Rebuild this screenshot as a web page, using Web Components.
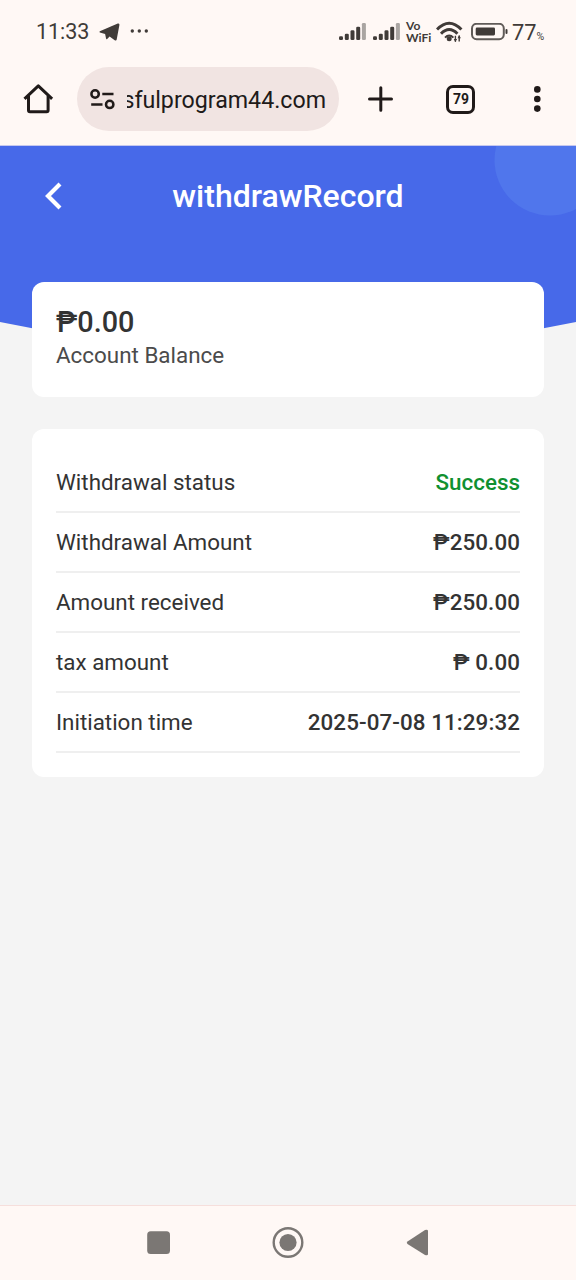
<!DOCTYPE html>
<html lang="en">
<head>
<meta charset="utf-8">
<title>withdrawRecord</title>
<style>
html,body{margin:0;height:100%}
body{font-family:Roboto,"Liberation Sans",sans-serif;background:#f4f4f4;color:#333}
</style>
</head>
<body>
<phone-screen>
  <status-bar slot="top"></status-bar>
  <browser-bar slot="top" tabs="79">sfulprogram44.com</browser-bar>
  <page-header>withdrawRecord</page-header>
  <balance-card amount="₱0.00">Account Balance</balance-card>
  <record-card>
    <record-row label="Withdrawal status" success>Success</record-row>
    <record-row label="Withdrawal Amount">₱250.00</record-row>
    <record-row label="Amount received">₱250.00</record-row>
    <record-row label="tax amount">₱ 0.00</record-row>
    <record-row label="Initiation time">2025-07-08 11:29:32</record-row>
  </record-card>
  <nav-bar slot="bottom"></nav-bar>
</phone-screen>
<script>
function define(name, html, setup) {
  customElements.define(name, class extends HTMLElement {
    connectedCallback() {
      if (this.shadowRoot) return;
      const root = this.attachShadow({mode: 'open'});
      root.innerHTML = html;
      if (setup) setup(root, this);
    }
  });
}

define('phone-screen', `
<style>
:host{display:flex;flex-direction:column;width:576px;height:1280px;overflow:hidden;background:#f4f4f4}
main{flex:1;min-height:0;display:flex;flex-direction:column}
</style>
<slot name="top"></slot><main><slot></slot></main><slot name="bottom"></slot>`);

define('signal-bars', `
<style>:host{display:block;width:28px;height:18px}svg{display:block}</style>
<svg width="28" height="18" viewBox="0 0 28 18" fill="#403b38">
<rect x="0" y="13.3" width="4" height="3.7" rx="1.3"/><rect x="5.8" y="10.8" width="4" height="6.2" rx="1.3"/><rect x="11.5" y="7.3" width="4" height="9.7" rx="1.3"/><rect x="17.2" y="3.8" width="4" height="13.2" rx="1.3"/><rect x="22.9" y="0" width="4" height="17" rx="1.3" fill="#aaa5a2"/>
</svg>`);

define('status-bar', `
<style>
:host{display:flex;align-items:center;flex:none;box-sizing:border-box;height:64px;padding:0 31px 0 36px;background:#fff8f5;color:#403b38}
svg{display:block;flex:none}
.time{font-size:21.6px;line-height:26px;width:53px;letter-spacing:-.1px;white-space:nowrap}
.tg{margin-left:10px}.dots{margin-left:9px}
.push{margin-left:auto}
.s2{margin-left:6px}.wifi{margin-left:5px}.bat{margin-left:8px}
.vo{display:flex;flex-direction:column;flex:none;width:25px;margin-left:5px;padding-bottom:1px;font:700 12px/12px Lato,sans-serif;white-space:nowrap}
.pct{display:flex;align-items:baseline;margin-left:4px;width:33px;padding-top:1px;font-size:21.8px;line-height:24px;white-space:nowrap}
small{font-size:10.5px;line-height:12px}
</style>
<span class="time">11:33</span>
<svg class="tg" width="22" height="20" viewBox="0 0 22 20"><path fill="#403b38" d="M.8 9.2 18.8 1.6Q20.7 1 20.4 3L17.7 17.5Q17.3 19.2 15.7 18.2L10.6 14.4 8.2 17Q7.2 17.7 7 16.3L6.1 12.1.9 10.5Q0 10 .8 9.2ZM7.6 12.3 16.7 4.6 9.1 12.9Z"/></svg>
<svg class="dots" width="19" height="20" viewBox="0 0 19 20" fill="#403b38"><circle cx="2.3" cy="9" r="1.7"/><circle cx="9.3" cy="9" r="1.7"/><circle cx="16.3" cy="9" r="1.7"/></svg>
<signal-bars class="push"></signal-bars>
<signal-bars class="s2"></signal-bars>
<div class="vo"><div>Vo</div><div>WiFi</div></div>
<svg class="wifi" width="27" height="22" viewBox="0 0 27 22" fill="none" stroke="#403b38" stroke-width="3"><path d="M1 8.5Q13.2-4.2 25.4 8.5"/><path d="M5 12.8Q13.2 4.4 21.4 12.8"/><path d="M9 16.6Q13.2 12.4 17.4 16.6" stroke-width="2"/><circle cx="13.2" cy="17.8" r="2.5" fill="#403b38" stroke="none"/><path d="M19.4 20.8v-6M23.2 14.5v6" stroke-width="1.4"/><path d="M17.7 18 19.4 21l1.7-3ZM21.5 17.3l1.7-3 1.7 3Z" fill="#403b38" stroke="none"/></svg>
<svg class="bat" width="37" height="18" viewBox="0 0 37 18"><rect x="1" y=".8" width="31.8" height="15.4" rx="4.6" fill="none" stroke="#605b58" stroke-width="2"/><rect x="4.7" y="4.6" width="19.3" height="7.8" rx="1.3" fill="#403b38"/><rect x="34.5" y="6" width="2" height="5" rx="1" fill="#403b38"/></svg>
<span class="pct">77<small>%</small></span>`);

define('browser-bar', `
<style>
:host{display:flex;align-items:center;flex:none;box-sizing:border-box;height:82px;padding:0 35px 11px 23px;background:#fff8f5;color:#201a19;border-bottom:1px solid #c6c8ee}
svg{display:block;flex:none}
.url{display:flex;align-items:center;box-sizing:border-box;width:262px;height:64px;margin-left:23px;padding:0 13px 0 13px;border-radius:32px;background:#f1e4e2}
.host{flex:1;margin-left:11px;padding-top:2px;display:flex;justify-content:flex-end;overflow:hidden;font-size:23.2px;line-height:32px;white-space:nowrap}
.plus{margin-left:28px}
.tabs{display:flex;align-items:center;justify-content:center;box-sizing:border-box;width:29px;height:29px;margin-left:52px;border:3px solid #201a19;border-radius:7px;font-size:15.5px;font-weight:700;line-height:23px}
.num{transform:scaleX(.9)}
.more{margin-left:auto}
</style>
<svg width="31" height="32" viewBox="0 0 31 32" fill="none" stroke="#201a19" stroke-width="3" stroke-linejoin="round"><path d="M1.5 15.8 15.3 2.8 29.1 15.8"/><path d="M5.5 13V27.2Q5.5 28.7 7 28.7H23.6Q25.1 28.7 25.1 27.2V13"/></svg>
<div class="url">
<svg width="26" height="24" viewBox="0 0 26 24" fill="none" stroke="#201a19" stroke-width="2.5"><circle cx="5.1" cy="7" r="3.7"/><path d="M12.3 7H23.5M1.2 17.4H12.5"/><circle cx="19.7" cy="17.4" r="3.7"/></svg>
<span class="host"><slot></slot></span>
</div>
<svg class="plus" width="27" height="28" viewBox="0 0 27 28" stroke="#201a19" stroke-width="3" stroke-linecap="round"><path d="M2.5 14H24.5M13.8 2.7V25.2"/></svg>
<div class="tabs"><span class="num"></span></div>
<svg class="more" width="8" height="28" viewBox="0 0 8 28" fill="#201a19"><circle cx="4.3" cy="4.4" r="3.3"/><circle cx="4.3" cy="14" r="3.3"/><circle cx="4.3" cy="23.6" r="3.3"/></svg>`,
(root, el) => { root.querySelector('.num').textContent = el.getAttribute('tabs'); });

define('page-header', `
<style>
:host{display:grid;grid-template-columns:100px 1fr 100px;flex:none;align-items:center;box-sizing:border-box;height:102px;padding-bottom:2px;position:relative;isolation:isolate;color:#fff}
.bg{position:absolute;left:0;top:0;z-index:-1}
.back{margin-left:43px;display:block}
h1{margin:0;text-align:center;font-size:32px;line-height:40px;font-weight:500;white-space:nowrap}
</style>
<svg class="bg" width="576" height="215" viewBox="0 0 576 215"><path fill="#4769e9" d="M0 0H576V176Q288 235 0 176Z"/><circle cx="550" cy="14" r="55.5" fill="#5076ec"/></svg>
<svg class="back" width="20" height="28" viewBox="0 0 20 28" fill="none" stroke="#fff" stroke-width="4.2"><path d="M17 2 5 14 17 26"/></svg>
<h1><slot></slot></h1>`);

define('balance-card', `
<style>
:host{display:block;flex:none;position:relative;box-sizing:border-box;height:115px;margin:33.6px 32px 0;padding:22.4px 24px;background:#fff;border-radius:12px}
.amount{font-size:28.8px;line-height:36px;font-weight:500;color:#333}
.label{margin-top:-1px;font-size:22.4px;line-height:32px;color:#4b4b4b}
</style>
<div class="amount"></div><div class="label"><slot></slot></div>`,
(root, el) => { root.querySelector('.amount').textContent = el.getAttribute('amount'); });

define('record-card', `
<style>
:host{display:flex;flex-direction:column;flex:none;box-sizing:border-box;height:348px;margin:32.4px 32px 0;padding:24px;background:#fff;border-radius:12px}
</style><slot></slot>`);

define('record-row', `
<style>
:host{display:flex;justify-content:space-between;align-items:center;box-sizing:border-box;height:60px;border-bottom:2px solid #efefef;font-size:22.4px;line-height:30px;color:#333;white-space:nowrap}
.value{font-weight:500;letter-spacing:.08px}
:host([success]) .value{color:#109030;letter-spacing:0}
</style>
<span class="label"></span><span class="value"><slot></slot></span>`,
(root, el) => { root.querySelector('.label').textContent = el.getAttribute('label'); });

define('nav-bar', `
<style>
:host{display:flex;align-items:center;flex:none;box-sizing:border-box;height:75px;padding-left:147px;background:#fff8f5;border-top:1px solid #f6dfdc}
svg{display:block;flex:none}
.home{margin-left:101px}.back{margin-left:102px}
</style>
<svg width="24" height="24" viewBox="0 0 24 24"><rect x=".2" y=".2" width="22.8" height="22.8" rx="3.5" fill="#7b7774"/></svg>
<svg class="home" width="32" height="32" viewBox="0 0 32 32"><circle cx="16" cy="15.5" r="14.3" fill="none" stroke="#7b7774" stroke-width="2.4"/><circle cx="16" cy="15.5" r="8.6" fill="#7b7774"/></svg>
<svg class="back" width="23" height="28" viewBox="0 0 23 28"><path fill="#7b7774" d="M1.5 12.5 19 1Q22 .2 22 2V25Q22 27 19 26L1.5 15Q0 13.7 1.5 12.5Z"/></svg>`);
</script>
</body>
</html>
